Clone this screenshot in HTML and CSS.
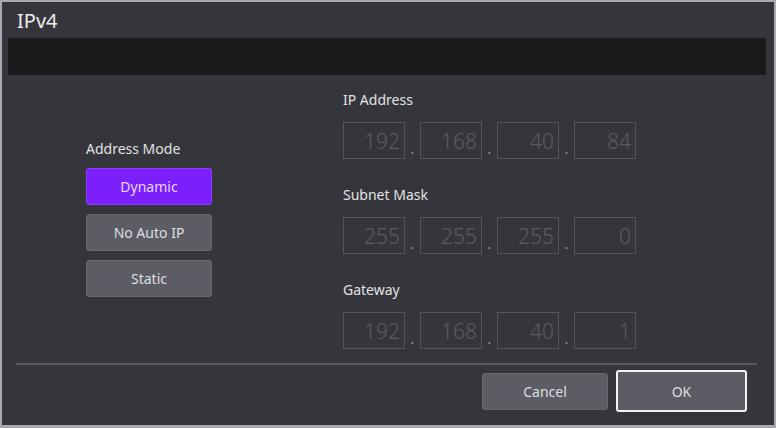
FILE: index.html
```html
<!DOCTYPE html>
<html lang="en">
<head>
  <meta charset="UTF-8">
  <title>IPv4</title>
  <link rel="stylesheet" href="styles.css">
</head>
<body>
  <div class="dialog">
    <div class="title">IPv4</div>
    <div class="bar"></div>

    <div class="content">
      <div class="mode">
        <div class="label">Address Mode</div>
        <button class="btn active">Dynamic</button>
        <button class="btn">No Auto IP</button>
        <button class="btn">Static</button>
      </div>

      <div class="fields">
        <div class="group">
          <div class="label">IP Address</div>
          <div class="ip">
            <div class="octet">192</div><span class="dot">.</span>
            <div class="octet">168</div><span class="dot">.</span>
            <div class="octet">40</div><span class="dot">.</span>
            <div class="octet">84</div>
          </div>
        </div>
        <div class="group">
          <div class="label">Subnet Mask</div>
          <div class="ip">
            <div class="octet">255</div><span class="dot">.</span>
            <div class="octet">255</div><span class="dot">.</span>
            <div class="octet">255</div><span class="dot">.</span>
            <div class="octet">0</div>
          </div>
        </div>
        <div class="group">
          <div class="label">Gateway</div>
          <div class="ip">
            <div class="octet">192</div><span class="dot">.</span>
            <div class="octet">168</div><span class="dot">.</span>
            <div class="octet">40</div><span class="dot">.</span>
            <div class="octet">1</div>
          </div>
        </div>
      </div>
    </div>

    <div class="footer">
      <div class="divider"></div>
      <div class="actions">
        <button class="btn cancel">Cancel</button>
        <button class="btn ok">OK</button>
      </div>
    </div>
  </div>
</body>
</html>
```

FILE: styles.css
```css
body {
  margin: 0;
  background: #35363b;
  font-family: "Noto Sans", "Open Sans", sans-serif;
  color: #e4e4e6;
}

.dialog {
  width: 776px;
  height: 428px;
  box-sizing: border-box;
  border: 2px solid #a9a9ad;
  border-bottom-width: 3px;
  background: #35363b;
  display: flex;
  flex-direction: column;
}

.title {
  height: 34px;
  padding: 2px 0 0 15px;
  font-size: 20px;
  line-height: 34px;
  color: #ececee;
}

.bar {
  height: 37px;
  margin: 0 8px 0 6px;
  background: #1b1b1c;
}

.content {
  display: flex;
  padding-left: 84px;
}

.label {
  font-size: 14px;
  line-height: 20px;
  color: #e2e2e4;
}

.mode {
  width: 126px;
  margin-top: 64px;
  display: flex;
  flex-direction: column;
  gap: 9px;
}

.btn {
  height: 37px;
  box-sizing: border-box;
  padding: 0;
  border: 1px solid #696a71;
  border-radius: 3px;
  background: #5c5d64;
  color: #dedee2;
  font-family: inherit;
  font-size: 14px;
}

.btn.active {
  background: #7c20fb;
  border-color: #8a3cff;
  color: #e4d6ff;
}

.fields {
  margin-left: 131px;
  padding-top: 15px;
  display: flex;
  flex-direction: column;
  gap: 26px;
}

.group {
  display: flex;
  flex-direction: column;
  gap: 12px;
}

.ip {
  display: flex;
  align-items: flex-end;
}

.octet {
  width: 62px;
  height: 37px;
  box-sizing: border-box;
  border: 1px solid #55565c;
  padding-right: 4px;
  text-align: right;
  font-size: 21px;
  font-weight: 300;
  line-height: 36px;
  color: #5b5c62;
}

.dot {
  width: 15px;
  margin-bottom: 3px;
  text-align: center;
  font-size: 14px;
  line-height: 14px;
  color: #9a9a9e;
}

.footer {
  margin-top: auto;
  padding-bottom: 13px;
}

.divider {
  height: 2px;
  margin: 0 17px 0 14px;
  background: #595a60;
}

.actions {
  margin-top: 5px;
  padding-right: 27px;
  display: flex;
  justify-content: flex-end;
  align-items: center;
  gap: 8px;
}

.cancel {
  width: 126px;
}

.ok {
  width: 131px;
  height: 42px;
  border: 2px solid #f2f2f4;
  background: #5b5c63;
}
```
